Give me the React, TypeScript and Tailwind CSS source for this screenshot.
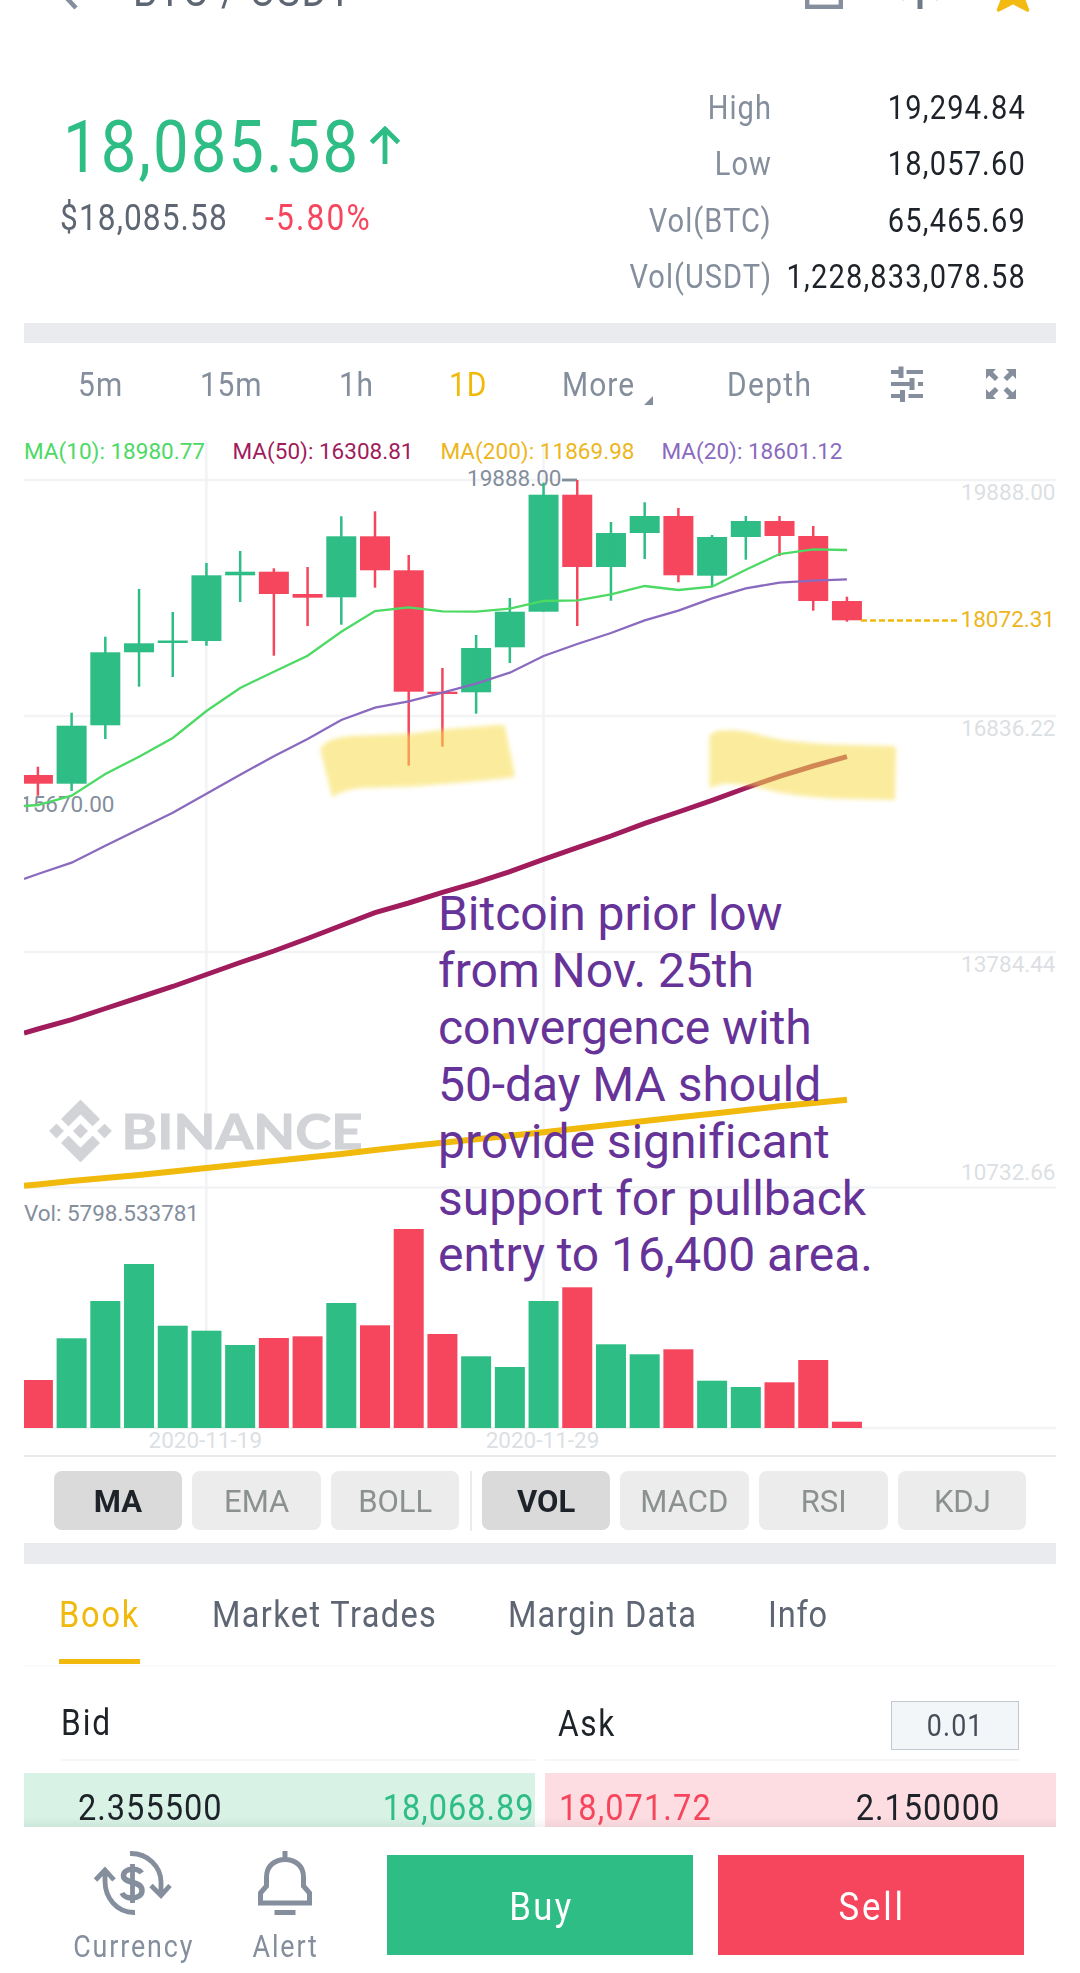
import React from 'react';
import clsx from 'clsx';

const GREEN = '#2ebd85';
const RED = '#f6465d';

// up, open/close top, open/close bottom, wick top, wick bottom, volume top
type Candle = [boolean, number, number, number, number, number];

const candles: Candle[] = [
  [false, 775, 783.7, 766.7, 795.7, 1380],
  [true, 725.7, 783.7, 712.7, 791, 1338.3],
  [true, 652.3, 725.3, 636.7, 739, 1301],
  [true, 643.3, 652.3, 589, 686.7, 1264],
  [true, 640.5, 643, 612, 677, 1325.7],
  [true, 575.3, 641, 563, 645.7, 1330.7],
  [true, 571.7, 575.3, 551, 602, 1345],
  [false, 571.7, 594, 568.3, 655.7, 1338],
  [false, 594, 597.7, 567, 626, 1336.3],
  [true, 536.3, 597.3, 516.3, 624.7, 1303],
  [false, 536.3, 570.3, 511.3, 587.7, 1325.3],
  [false, 570.3, 691.7, 555, 765.7, 1229],
  [false, 691.7, 694, 668, 746.7, 1334],
  [true, 648, 692.3, 635, 713.7, 1356.3],
  [true, 611.7, 647.3, 598, 663, 1367],
  [true, 494.7, 611.7, 482.7, 611.7, 1301],
  [false, 494.7, 567, 480, 626, 1287.3],
  [true, 533, 567, 522, 600.7, 1344.3],
  [true, 516, 533, 502.3, 559, 1354.3],
  [false, 516, 575.3, 508, 582.3, 1349.3],
  [true, 537, 575.7, 535, 586.7, 1380.7],
  [true, 521, 537, 516, 559.7, 1387],
  [false, 521, 536, 516, 556, 1382.3],
  [false, 536, 601, 526, 610.7, 1360],
  [false, 601, 620.3, 596.7, 621.7, 1421.7],
];

const ma10 = [805, 795.7, 774, 756.7, 738, 711, 688, 671.7, 655.7, 631.7, 611, 607.3, 611.3, 611.7, 608.7, 601, 600.3, 594.3, 586, 590, 586.7, 569.7, 554, 549.3, 550];
const ma20 = [874, 862.7, 845.7, 829.3, 812.7, 793.7, 774.7, 756.3, 739, 720, 707.7, 701.3, 692.7, 683.7, 672.7, 656, 644, 633, 620.3, 610.7, 598.3, 588.3, 582.7, 580.7, 579.3];
const ma50 = [1029, 1019.6, 1008.5, 997.5, 986.5, 974.5, 962.5, 951, 938.5, 925.5, 912.7, 903, 892.3, 882.7, 871.7, 859.3, 847.7, 836, 823.3, 812, 800.3, 788, 776.3, 766, 756.7];
const ma200 = [1184.5, 1181, 1178, 1175, 1171.5, 1168, 1164.5, 1161, 1157.5, 1154, 1150, 1146.3, 1142.8, 1139.3, 1135.8, 1132.3, 1128.5, 1124.8, 1121, 1117.3, 1113.7, 1110, 1106.3, 1103, 1099.7];

const cx = (i: number) => 37.9 + i * 33.71;
const line = (start: number, values: number[]) =>
  [`24,${start}`, ...values.map((y, i) => `${cx(i)},${y}`)].join(' ');

const axisLabels = [
  { y: 500, text: '19888.00' },
  { y: 736, text: '16836.22' },
  { y: 972, text: '13784.44' },
  { y: 1180, text: '10732.66' },
];

const legend = [
  { x: 24, w: 181, text: 'MA(10): 18980.77', color: '#4cd964' },
  { x: 232.5, w: 181, text: 'MA(50): 16308.81', color: '#a01c5c' },
  { x: 440.5, w: 194, text: 'MA(200): 11869.98', color: '#edb61c' },
  { x: 661.5, w: 181, text: 'MA(20): 18601.12', color: '#8a6abf' },
];

// Narrow DIN-like lettering
function Din({ children, className = 'tracking-[0.04em]' }: { children: React.ReactNode; className?: string }) {
  return (
    <span className={clsx('inline-block whitespace-nowrap scale-x-[0.88]', className)}>
      {children}
    </span>
  );
}

function Header() {
  return (
    <div className="h-[14px] overflow-hidden flex items-end text-[#5e6673]">
      <svg width="24" height="32" viewBox="0 0 24 32" className="ml-[57px] mb-[2px] shrink-0" fill="none">
        <path d="M19 28L5 13L19 -2" stroke="#848e9c" strokeWidth="4.5" />
      </svg>
      <div className="ml-[52px] -mb-[2px] w-[250px] text-[44px] leading-[50px]">
        <Din className="origin-left tracking-[0.045em]">BTC / USDT</Din>
      </div>
      <svg width="38" height="38" viewBox="0 0 38 38" className="ml-auto mb-[5px] shrink-0" fill="none">
        <rect x="2.2" y="2.2" width="33.6" height="33.6" stroke="#848e9c" strokeWidth="4.4" />
      </svg>
      <svg width="40" height="38" viewBox="0 0 40 38" className="ml-[57px] mb-[5px] shrink-0" fill="none">
        <path d="M20 0V38" stroke="#6f7a88" strokeWidth="5" />
        <path d="M1 26Q3 30 6 26M34 26Q37 30 39 26" stroke="#848e9c" strokeWidth="2.5" />
      </svg>
      <svg width="44" height="42" viewBox="0 0 44 42" className="ml-[51px] mr-[45px] mb-[1px] shrink-0">
        <path
          d="M22 2L28 15L42 16.500L31.500 26L36.500 39L22 31.500L7.500 39L12.500 26L2 16.500L16 15Z"
          fill="#f3ba12"
          stroke="#f3ba12"
          strokeWidth="3.5"
          strokeLinejoin="round"
        />
      </svg>
    </div>
  );
}

function Summary() {
  const stats = [
    ['High', '19,294.84'],
    ['Low', '18,057.60'],
    ['Vol(BTC)', '65,465.69'],
    ['Vol(USDT)', '1,228,833,078.58'],
  ];
  return (
    <div className="h-[309px] flex justify-between pr-[54px]">
      <div className="pl-[60px] pt-[92px]">
        <div className="flex items-center h-[80px]">
          <div className="pl-[3px] w-[310px] pt-[3px] text-[72px] leading-[80px] text-[#2ebd85]">
            <Din className="origin-left tracking-[0.033em]">18,085.58</Din>
          </div>
          <svg width="30" height="38" viewBox="0 0 30 38" className="-mt-[3px]" fill="none" stroke={GREEN} strokeWidth="4.8">
            <path d="M15 38V3M1.500 16.500L15 3L28.500 16.500" />
          </svg>
        </div>
        <div className="flex h-[40px] mt-[12px] text-[36px] leading-[40px]">
          <div className="w-[205px] text-[#5e6673]">
            <Din className="origin-left tracking-[0.034em]">$18,085.58</Din>
          </div>
          <div className="text-[#f6465d]">
            <Din className="origin-left tracking-[0.07em]">-5.80%</Din>
          </div>
        </div>
      </div>
      <div className="pt-[66px] text-[33px]">
        {stats.map(([label, value]) => (
          <div key={label} className="flex justify-end h-[56.300px] leading-[56px]">
            <div className="w-[200px] text-right text-[#848e9c]">
              <Din className="origin-right tracking-[0.035em]">{label}</Din>
            </div>
            <div className="w-[254px] flex justify-end text-[#1e2329]">
              <Din className="origin-right tracking-[0.04em]">{value}</Din>
            </div>
          </div>
        ))}
      </div>
    </div>
  );
}

function Intervals() {
  return (
    <div className="h-[87px] pb-[5px] flex items-center text-[34px] text-[#848e9c]">
      <div className="ml-[78px] w-[122px]"><Din className="origin-left tracking-[0.04em]">5m</Din></div>
      <div className="w-[139px]"><Din className="origin-left tracking-[0.025em]">15m</Din></div>
      <div className="w-[110px]"><Din className="origin-left tracking-[0.02em]">1h</Din></div>
      <div className="w-[113px] text-[#f0b90b]"><Din className="origin-left tracking-[0.03em]">1D</Din></div>
      <div className="w-[82px]"><Din className="origin-left tracking-[0.035em]">More</Din></div>
      <svg width="9" height="9" viewBox="0 0 9 9" className="mt-[32px]">
        <path d="M9 0V9H0Z" fill="#848e9c" />
      </svg>
      <div className="ml-[74px] w-[163px]"><Din className="origin-left tracking-[0.045em]">Depth</Din></div>
      <svg width="34" height="36" viewBox="0 0 34 36" className="-mt-[1px]" fill="none" stroke="#848e9c" strokeWidth="4">
        <path d="M1 6H11M16.500 6H33M1 18H22M28 18H33M1 30H13M18.500 30H33" />
        <path d="M11 0.500V12M22 12V24M12.500 24V36" strokeWidth="5" />
      </svg>
      <svg width="30" height="30" viewBox="0 0 30 30" className="ml-[62px] -mt-[1px]" fill="#848e9c">
        <path d="M0 0H10L7 3L12.500 8.500L9 12L3.200 6.500L0 10Z" />
        <path d="M30 0V10L26.800 6.500L21 12L17.500 8.500L23 3L20 0Z" />
        <path d="M0 30V20L3.200 23.500L9 18L12.500 21.500L7 27L10 30Z" />
        <path d="M30 30H20L23 27L17.500 21.500L21 18L26.800 23.500L30 20Z" />
      </svg>
    </div>
  );
}

function Chart() {
  return (
    <div className="relative ml-6 w-[1032px] h-[1025px]">
      <svg width="1032" height="1025" viewBox="24 430 1032 1025" className="block font-[Roboto,sans-serif] text-[22.500px]">
        <g stroke="#f2f3f5" strokeWidth="2.500">
          {[480, 716, 952, 1187.5, 1428].map((y) => (
            <path key={y} d={`M24 ${y}H1056`} />
          ))}
          <path d="M206.300 442V1428M543.500 442V1428" />
        </g>

        {/* Watermark */}
        <g fill="#d1d3d6">
          <path
            transform="translate(49.500 1100) scale(0.49)"
            stroke="#d1d3d6"
            strokeWidth="1.500"
            strokeLinejoin="round"
            d="M38.730 53.200L63.310 28.620L87.900 53.220L102.200 38.920L63.310 0L24.420 38.890ZM0 63.310L14.300 49L28.610 63.310L14.310 77.610ZM38.730 73.410L63.310 98L87.900 73.400L102.210 87.690L63.310 126.610L24.430 87.740ZM98 63.310L112.310 49L126.610 63.310L112.300 77.610ZM77.830 63.300L63.310 48.780L48.790 63.300L63.310 77.830Z"
          />
          <text
            x="121.500"
            y="1148.500"
            textLength="241"
            lengthAdjust="spacingAndGlyphs"
            stroke="#d1d3d6"
            strokeWidth="1"
            className="font-[Lato,sans-serif] font-bold text-[48px]"
          >
            BINANCE
          </text>
        </g>

        {legend.map((l) => (
          <text key={l.text} x={l.x} y="459" textLength={l.w} fill={l.color}>{l.text}</text>
        ))}
        {axisLabels.map((l) => (
          <text key={l.text} x="1055.500" y={l.y} textAnchor="end" fill="#dcdfe3">{l.text}</text>
        ))}
        <text x="205.300" y="1448" textAnchor="middle" fill="#dcdfe3">2020-11-19</text>
        <text x="542.500" y="1448" textAnchor="middle" fill="#dcdfe3">2020-11-29</text>
        <text x="24" y="1221" textLength="175" fill="#848e9c">Vol: 5798.533781</text>
        <text x="467" y="486" fill="#848e9c">19888.00</text>
        <path d="M562 480H577" stroke="#848e9c" strokeWidth="2.800" />

        {candles.map(([up, top, bottom, high, low, vol], i) => (
          <g key={i} fill={up ? GREEN : RED}>
            <rect x={cx(i) - 15} y={top} width="30" height={bottom - top} />
            <rect x={cx(i) - 1.25} y={high} width="2.500" height={low - high} />
            <rect x={cx(i) - 15} y={vol} width="30" height={1428 - vol} />
          </g>
        ))}
        <text x="20" y="812" fill="#848e9c">15670.00</text>

        <g fill="none">
          <polyline points={line(806, ma10)} stroke="#4cd964" strokeWidth="2.300" />
          <polyline points={line(879, ma20)} stroke="#8a6abf" strokeWidth="2.300" />
          <polyline points={line(1033, ma50)} stroke="#a01c5c" strokeWidth="5" />
          <polyline points={line(1185.7, ma200)} stroke="#f0b90b" strokeWidth="6" />
        </g>
        <path d="M861 620.500H957" stroke="#f0b90b" strokeWidth="2.500" strokeDasharray="6 3" />
        <text x="1055" y="627" textAnchor="end" fill="#edb61c">18072.31</text>

        {/* Highlighter strokes */}
        <g fill="#f8dd50" opacity="0.560" className="blur-[2px]">
          <path d="M320 748Q330 737 350 736L413 733.500L448 729L498 725Q504 724 505 727L515 775Q514 777.500 508 778L468 782L413 786.500L362 788Q345 789 332 797Z" />
          <path d="M709.500 737Q711 731 722 730.500Q742 729 760 735Q781 741.500 833 744.500L893 746Q896 746 896 750L895 800L833 798.500Q790 796 765 789Q740 783 722 784L709.500 788Z" />
        </g>
      </svg>
      <div className="absolute left-[414px] top-[456px] text-[48px] leading-[56.900px] text-[#663399] whitespace-pre tracking-[-0.001em]">
        {`Bitcoin prior low
from Nov. 25th
convergence with
50-day MA should
provide significant
support for pullback
entry to 16,400 area.`}
      </div>
    </div>
  );
}

function IndicatorButton({ name, active }: { name: string; active?: boolean }) {
  return (
    <button
      className={clsx(
        'w-[128.500px] h-[59px] rounded-lg text-[32px] leading-[60px]',
        active ? 'bg-[#dadada] text-[#1e2329] font-bold' : 'bg-[#ececec] text-[#8a918f]'
      )}
    >
      <span className="inline-block scale-x-[0.97]">{name}</span>
    </button>
  );
}

function Indicators() {
  return (
    <div className="mx-6 h-[88px] border-t-2 border-[#ebebeb] pl-[29.500px] pt-[14px] flex items-start gap-[10.200px]">
      <IndicatorButton name="MA" active />
      <IndicatorButton name="EMA" />
      <IndicatorButton name="BOLL" />
      <div className="w-[2px] h-[60px] bg-[#ebebeb]" />
      <IndicatorButton name="VOL" active />
      <IndicatorButton name="MACD" />
      <IndicatorButton name="RSI" />
      <IndicatorButton name="KDJ" />
    </div>
  );
}

function BookTabs() {
  return (
    <div className="mx-6 h-[103px] border-b-2 border-[#fafafa] flex text-[37px] leading-[101px] text-[#5e6673]">
      <div className="ml-[35px] w-[81px] h-[100px] border-b-[5px] border-[#f0b90b] text-[#f0b90b]">
        <Din className="origin-left tracking-[0.055em]">Book</Din>
      </div>
      <div className="ml-[72px] w-[296px]"><Din className="origin-left tracking-[0.042em]">Market Trades</Din></div>
      <div className="w-[260px]"><Din className="origin-left tracking-[0.035em]">Margin Data</Din></div>
      <div><Din className="origin-left tracking-[0.025em]">Info</Din></div>
    </div>
  );
}

function OrderBook() {
  return (
    <div className="text-[#1e2329]">
      <div className="h-[94px] flex text-[36px]">
        <div className="ml-[61px] w-[474px] border-b-2 border-[#f5f5f5] leading-[112px]">
          <Din className="origin-left tracking-[0.06em]">Bid</Din>
        </div>
        <div className="ml-[10px] w-[474px] border-b-2 border-[#f5f5f5] flex justify-between">
          <div className="pl-[13px] leading-[114px]">
            <Din className="origin-left tracking-[0.05em]">Ask</Din>
          </div>
          <div className="mt-[34px] w-[128px] h-[49px] border border-[#c1c8d1] bg-[#f3f6f9] text-center text-[30.500px] leading-[48px] text-[#474d57]">
            <Din>0.01</Din>
          </div>
        </div>
      </div>
      <div className="mt-[12px] mx-6 h-[54px] flex justify-between text-[37px] leading-[36px] relative">
        <div className="w-[511px] pt-[17px] pl-[54px] bg-[#d8f2e6] flex justify-between">
          <Din className="origin-left tracking-[0.03em]">2.355500</Din>
          <Din className="origin-right text-[#2ebd85] tracking-[0.03em]">18,068.89</Din>
        </div>
        <div className="w-[511px] pt-[17px] pl-[14px] pr-[56px] bg-[#fddde1] flex justify-between">
          <Din className="origin-left text-[#f6465d] tracking-[0.033em]">18,071.72</Din>
          <Din className="origin-right tracking-[0.03em]">2.150000</Din>
        </div>
        <div className="absolute inset-x-0 bottom-0 h-[10px] bg-linear-to-b from-transparent to-black/5" />
      </div>
    </div>
  );
}

function Footer() {
  return (
    <div className="h-[146px] flex text-[#848e9c]">
      <div className="ml-[63px] w-[140px] pt-[23px] flex flex-col items-center">
        <svg width="78" height="66" viewBox="0 0 78 66" fill="none" stroke="#848e9c" strokeWidth="4.800">
          <path d="M36 3.500C54 3 67 17 67 32V46M57 35.500L67 45.500L76 35.500" />
          <path d="M41 62.500C22 63 11 47 11 31V21M1.500 30L11 20L20 30" />
          <path d="M47.500 23C44 17 29 18 29.500 26C30 34 48 30.500 48 40.500C48 50 31 50 28 43" strokeWidth="5.500" />
          <path d="M38.500 14V53" />
        </svg>
        <div className="mt-[12.500px] pl-[1px] text-[30.500px] leading-[36px]"><Din className="tracking-[0.07em]">Currency</Din></div>
      </div>
      <div className="ml-[32px] w-[100px] pt-[23px] flex flex-col items-center">
        <svg width="54" height="66" viewBox="0 0 54 66" fill="none" stroke="#848e9c" strokeWidth="5">
          <path d="M27 1V10M2.500 53V43L8.500 36V27C8.500 3.500 45.500 3.500 45.500 27V36L51.500 43V53ZM16.500 62.500H37.500" />
        </svg>
        <div className="mt-[12.500px] pl-[2px] text-[30.500px] leading-[36px]"><Din className="tracking-[0.07em]">Alert</Din></div>
      </div>
      <button className="ml-[52px] mt-[28px] w-[306px] h-[100px] bg-[#2ebd85] text-white text-[39.500px] pt-[3px] pl-[2px]">
        <Din className="tracking-[0.065em]">Buy</Din>
      </button>
      <button className="ml-[25px] mt-[28px] w-[306px] h-[100px] bg-[#f6465d] text-white text-[39.500px] pt-[3px] pl-[3px]">
        <Din className="tracking-[0.08em]">Sell</Din>
      </button>
    </div>
  );
}

export default function App() {
  return (
    <div className="w-[1080px] h-[1973px] overflow-hidden bg-white font-[Roboto,sans-serif]">
      <Header />
      <Summary />
      <div className="mx-6 h-5 bg-[#eaebef]" />
      <Intervals />
      <Chart />
      <Indicators />
      <div className="mx-6 h-[21px] bg-[#eaebef]" />
      <BookTabs />
      <OrderBook />
      <Footer />
    </div>
  );
}
